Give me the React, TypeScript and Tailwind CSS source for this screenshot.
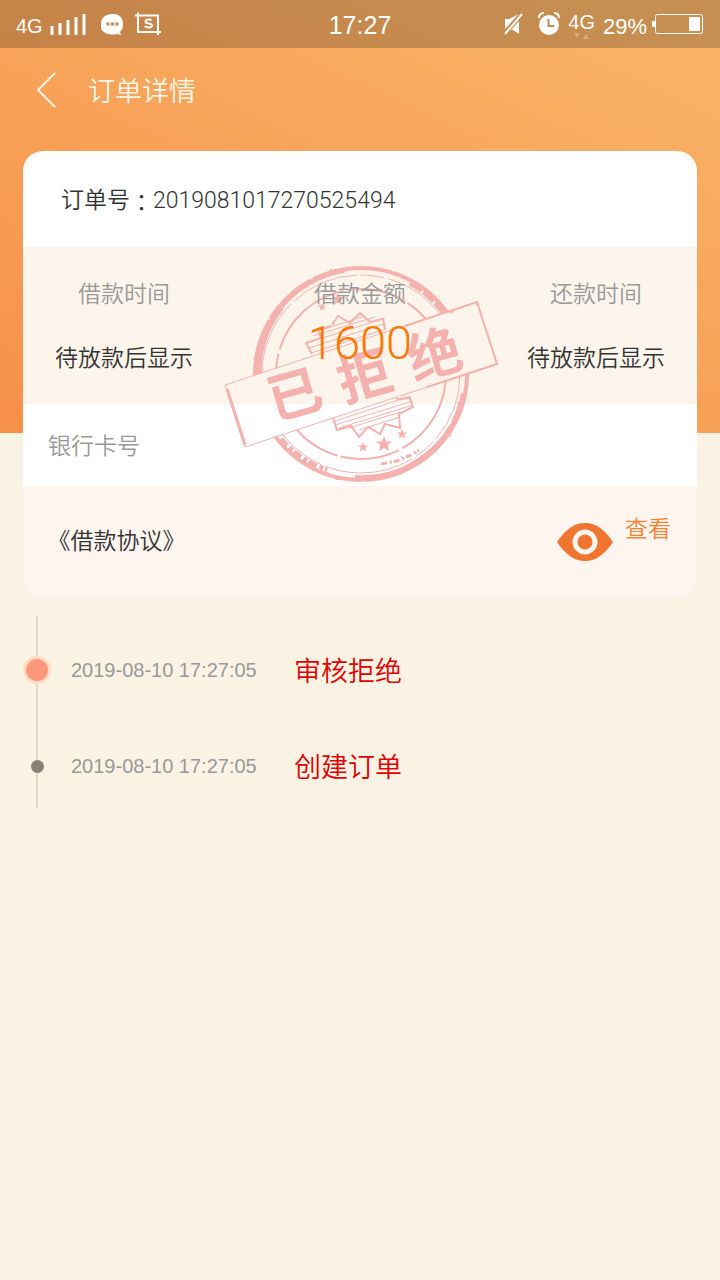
import { ReactNode } from 'react';

const ORDER_NO = '2019081017270525494';

const LOAN_INFO = [
  { label: '借款时间', value: '待放款后显示' },
  { label: '借款金额', value: '1600', amount: true },
  { label: '还款时间', value: '待放款后显示' },
];

const STEPS = [
  { time: '2019-08-10 17:27:05', text: '审核拒绝', active: true },
  { time: '2019-08-10 17:27:05', text: '创建订单', active: false },
];

function StatusBar() {
  return (
    <div className="grid grid-cols-[1fr_auto_1fr] items-center h-12 px-4 bg-black/20 text-white font-normal font-['Liberation_Sans',sans-serif]">
      <div className="flex items-center">
        <span className="text-xl mt-1">4G</span>
        <svg width="120" height="28" viewBox="0 0 120 28" className="ml-1" fill="none">
          {/* signal bars */}
          <path d="M5 16v9M13 13v12M21 10v15M29 7v18M37 4v21" stroke="#fff" strokeWidth="3" />
          {/* chat bubble */}
          <path d="M66 4c6 0 10 3 10 10 0 4-1 6-3 8l1 3-4-1c-2 1-10 1-13-2-3-2-3-4-3-8 0-7 5-10 12-10z" fill="#fff" />
          <path d="M59.5 14h3M64 14h3M68.5 14h3" stroke="#c1884f" strokeWidth="3" />
          {/* screenshot frame */}
          <path d="M88 5.500h23V25M91 2.500v19.500h23" stroke="#fff" strokeWidth="2" />
          <path d="M104.5 10.500c-1-1.500-6-1.500-6 1 0 3 6.500 1 6.500 4 0 2.500-6 2.500-7 .5" stroke="#fff" strokeWidth="2" />
        </svg>
      </div>
      <span className="text-[25px] mt-1">17:27</span>
      <div className="flex items-center justify-end">
        <svg width="60" height="28" viewBox="0 0 60 28" className="mr-1" fill="none">
          {/* muted speaker */}
          <path d="M1 9h4l10-5v20l-6-4H1z" fill="#fff" />
          <path d="M0 24L18 4" stroke="#c38b52" strokeWidth="5" />
          <path d="M1 24L18 4" stroke="#fff" strokeWidth="2" />
          {/* alarm clock */}
          <circle cx="45" cy="15" r="10" fill="#fff" />
          <path d="M35 8c0-3 2-5 5-5M55 8c0-3-2-5-5-5" stroke="#fff" strokeWidth="2" />
          <path d="M44.5 9v7h6" stroke="#c38b52" strokeWidth="2" />
        </svg>
        <div className="relative text-xl mb-1">
          4G
          <svg width="16" height="6" viewBox="0 0 16 6" className="absolute left-[6px] bottom-[-3px]" fill="#d9ad7b">
            <path d="M0 0h6L3 5z" />
            <path d="M9 6h6l-3-5z" />
          </svg>
        </div>
        <span className="ml-2 text-[22px] mt-1">29%</span>
        <svg width="53" height="20" viewBox="0 0 53 20" className="ml-1 shrink-0" fill="none">
          <path d="M2.500 7v6" stroke="#fff" strokeWidth="3" />
          <rect x="4.5" y="0.5" width="47" height="19" rx="2" stroke="#fff" />
          <path d="M38 3h11v14H38z" fill="#fff" />
        </svg>
      </div>
    </div>
  );
}

const STAR = 'M0-10L2.900-3.200 10-3 4.600 1.600 6.300 9 0 4.900-6.300 9-4.600 1.600-10-3-2.900-3.200z';

function RejectedStamp() {
  return (
    <svg viewBox="0 0 290 235" className="w-[290px] h-[235px]" fill="none" stroke="#f4b1ae" aria-hidden="true">
      <defs>
        <mask id="outside-band">
          <path d="M0 0h290v235H0z" fill="#fff" stroke="none" />
          <path d="M10 130L262 47l20 62L30 192z" fill="#000" stroke="none" />
        </mask>
        <filter id="rough" x="-5%" y="-5%" width="110%" height="110%">
          <feTurbulence type="fractalNoise" baseFrequency="0.15" numOctaves="2" seed="4" />
          <feDisplacementMap in="SourceGraphic" scale="2" />
        </filter>
      </defs>

      <g mask="url(#outside-band)">
        {/* outer ring, heavier where the ink pooled */}
        <g filter="url(#rough)">
          <circle cx="146" cy="119" r="106" strokeWidth="4" />
          <path d="M43 120A104 104 0 0 1 66 52" strokeWidth="7" />
          <path d="M64 54A105 105 0 0 1 130 15" strokeWidth="5" />
          <path d="M249 138A104 104 0 0 1 140 223" strokeWidth="6" />
          <path d="M66 184A103 103 0 0 0 112 215" strokeWidth="5" strokeDasharray="9 3 4 2" />
          <path d="M195 28A104 104 0 0 1 230 60" strokeWidth="5" strokeDasharray="14 2" />
          <path d="M166 209l16-3 14-6 8-5" strokeWidth="3" strokeDasharray="6 3 2 2" />
        </g>
        <circle cx="146" cy="119" r="99" strokeWidth="1" strokeDasharray="70 3 24 5 90 4" />
        <circle cx="146" cy="119" r="85" strokeWidth="2" strokeDasharray="90 4 60 3 130 5" />

        {/* jagged seal, upper and lower halves */}
        <path d="M97 99L91 88l15-5-3-8 13-4M117 70l6-9 12 7 10-10 10 9 13-3 2 11" strokeWidth="2" />
        <path d="M96 98l75-24M94 93l77-25M92 88l78-25M98 81l62-19M106 75l44-14" strokeWidth="1" />
        <path d="M118 163l4 12 14-4 8 11 9-10 12 7 5-10 15 4-1-14 14-7-3-9-14 1" strokeWidth="2" />
        <path d="M120 166l76-25M120 170l78-24M124 173l74-23M134 173l51-16M144 175l41-13" strokeWidth="1" />

        <g fill="#f4b1ae" stroke="none">
          <path d={STAR} transform="translate(107 52) scale(0.4)" />
          <path d={STAR} transform="translate(123 44) scale(0.6)" />
          <path d={STAR} transform="translate(148 192) scale(0.5)" />
          <path d={STAR} transform="translate(169 189) scale(0.8)" />
          <path d={STAR} transform="translate(187 179) scale(0.5)" />
        </g>
      </g>

      {/* band */}
      <g filter="url(#rough)">
        <path d="M10 130L262 47l20 62L30 192z" strokeWidth="1" />
        <path d="M190 71l72-24 20 62-70 23" strokeWidth="2" />
        <path d="M12 134l18 56" strokeWidth="3" />
      </g>
      <g
        fill="#f4b1ae"
        stroke="none"
        textAnchor="middle"
        className="text-[54px] font-bold font-['Noto_Sans_CJK_SC',sans-serif]"
      >
        <text transform="translate(85 158) rotate(-16)">已</text>
        <text transform="translate(155 140) rotate(-16)">拒</text>
        <text transform="translate(225 118) rotate(-16)">绝</text>
      </g>
    </svg>
  );
}

function EyeIcon() {
  return (
    <svg width="56" height="38" viewBox="0 0 56 38" aria-hidden="true">
      <path d="M0 19C8 7 17 0 28 0s20 7 28 19c-8 12-17 19-28 19S8 31 0 19z" fill="#f07530" />
      <circle cx="28" cy="19" r="10" fill="#f07530" stroke="#fdf5ee" strokeWidth="5" />
    </svg>
  );
}

function Row({ className, children }: { className: string; children: ReactNode }) {
  return <div className={`flex items-center ${className}`}>{children}</div>;
}

export default function App() {
  return (
    <div className="min-h-screen bg-[#faf3e3] bg-[linear-gradient(25deg,#f79049,#f8b669)] bg-[length:100%_433px] bg-no-repeat font-['Roboto','Noto_Sans_CJK_SC',sans-serif] font-[350]">
      <StatusBar />

      <header className="flex items-center h-[84px] px-9 text-[#fff4e4]">
        <button type="button" aria-label="返回">
          <svg width="20" height="36" viewBox="0 0 20 36" fill="none" stroke="currentColor" strokeWidth="2">
            <path d="M19 1L2 18l17 17" />
          </svg>
        </button>
        <h1 className="ml-8 pt-1 text-[27px]">订单详情</h1>
      </header>

      <main>
        <section className="relative mx-[23px] mt-[19px] rounded-[20px] overflow-hidden bg-white text-[23px] text-[#333]">
          <Row className="h-24 pt-1 pl-[38px]">
            订单号<span className="font-['Noto_Sans_CJK_TC',sans-serif]" lang="zh-Hant">：</span>
            {ORDER_NO}
          </Row>

          <div className="h-[157px] bg-[#fdf5ec]" />
          <Row className="h-[82px] pt-1 pl-[25px] text-[#999]">银行卡号</Row>

          {/* stamp sits over the rows, figures stay on top of it */}
          <div className="absolute inset-x-0 top-[104px] flex justify-center">
            <RejectedStamp />
          </div>
          <dl className="absolute inset-x-0 top-24 flex justify-between px-8 pt-8 text-center">
            {LOAN_INFO.map((item) => (
              <div key={item.label}>
                <dt className="leading-8 text-[#999]">{item.label}</dt>
                {item.amount ? (
                  <dd className="mt-2 text-[47px] leading-12 font-light text-[#ff7800]">{item.value}</dd>
                ) : (
                  <dd className="mt-8 leading-8">{item.value}</dd>
                )}
              </div>
            ))}
          </dl>

          <Row className="h-28 pl-9 pr-[26px] justify-between bg-[#fdf5ee]">
            <span className="[font-feature-settings:'halt']">《借款协议》</span>
            <a href="#agreement" className="flex items-center gap-3 text-[#f58232]">
              <EyeIcon />
              <span className="mb-6">查看</span>
            </a>
          </Row>
        </section>

        <ol className="relative mt-[18px] before:absolute before:left-9 before:inset-y-0 before:w-[2px] before:bg-[#e2d9ce]">
          {STEPS.map((step) => (
            <li key={step.text} className="relative flex items-center h-24 pt-3 pl-[23px]">
              <span className="flex justify-center w-7">
                {step.active ? (
                  <i className="size-7 rounded-full border-[3px] border-[#fddcc4] bg-[#ff977a]" />
                ) : (
                  <i className="size-[13px] rounded-full bg-[#8a8078]" />
                )}
              </span>
              <time className="w-[223px] ml-5 text-xl text-[#999] font-['Liberation_Sans',sans-serif]">{step.time}</time>
              <span className="pt-1 text-[27px] text-[#e00000]">{step.text}</span>
            </li>
          ))}
        </ol>
      </main>
    </div>
  );
}
